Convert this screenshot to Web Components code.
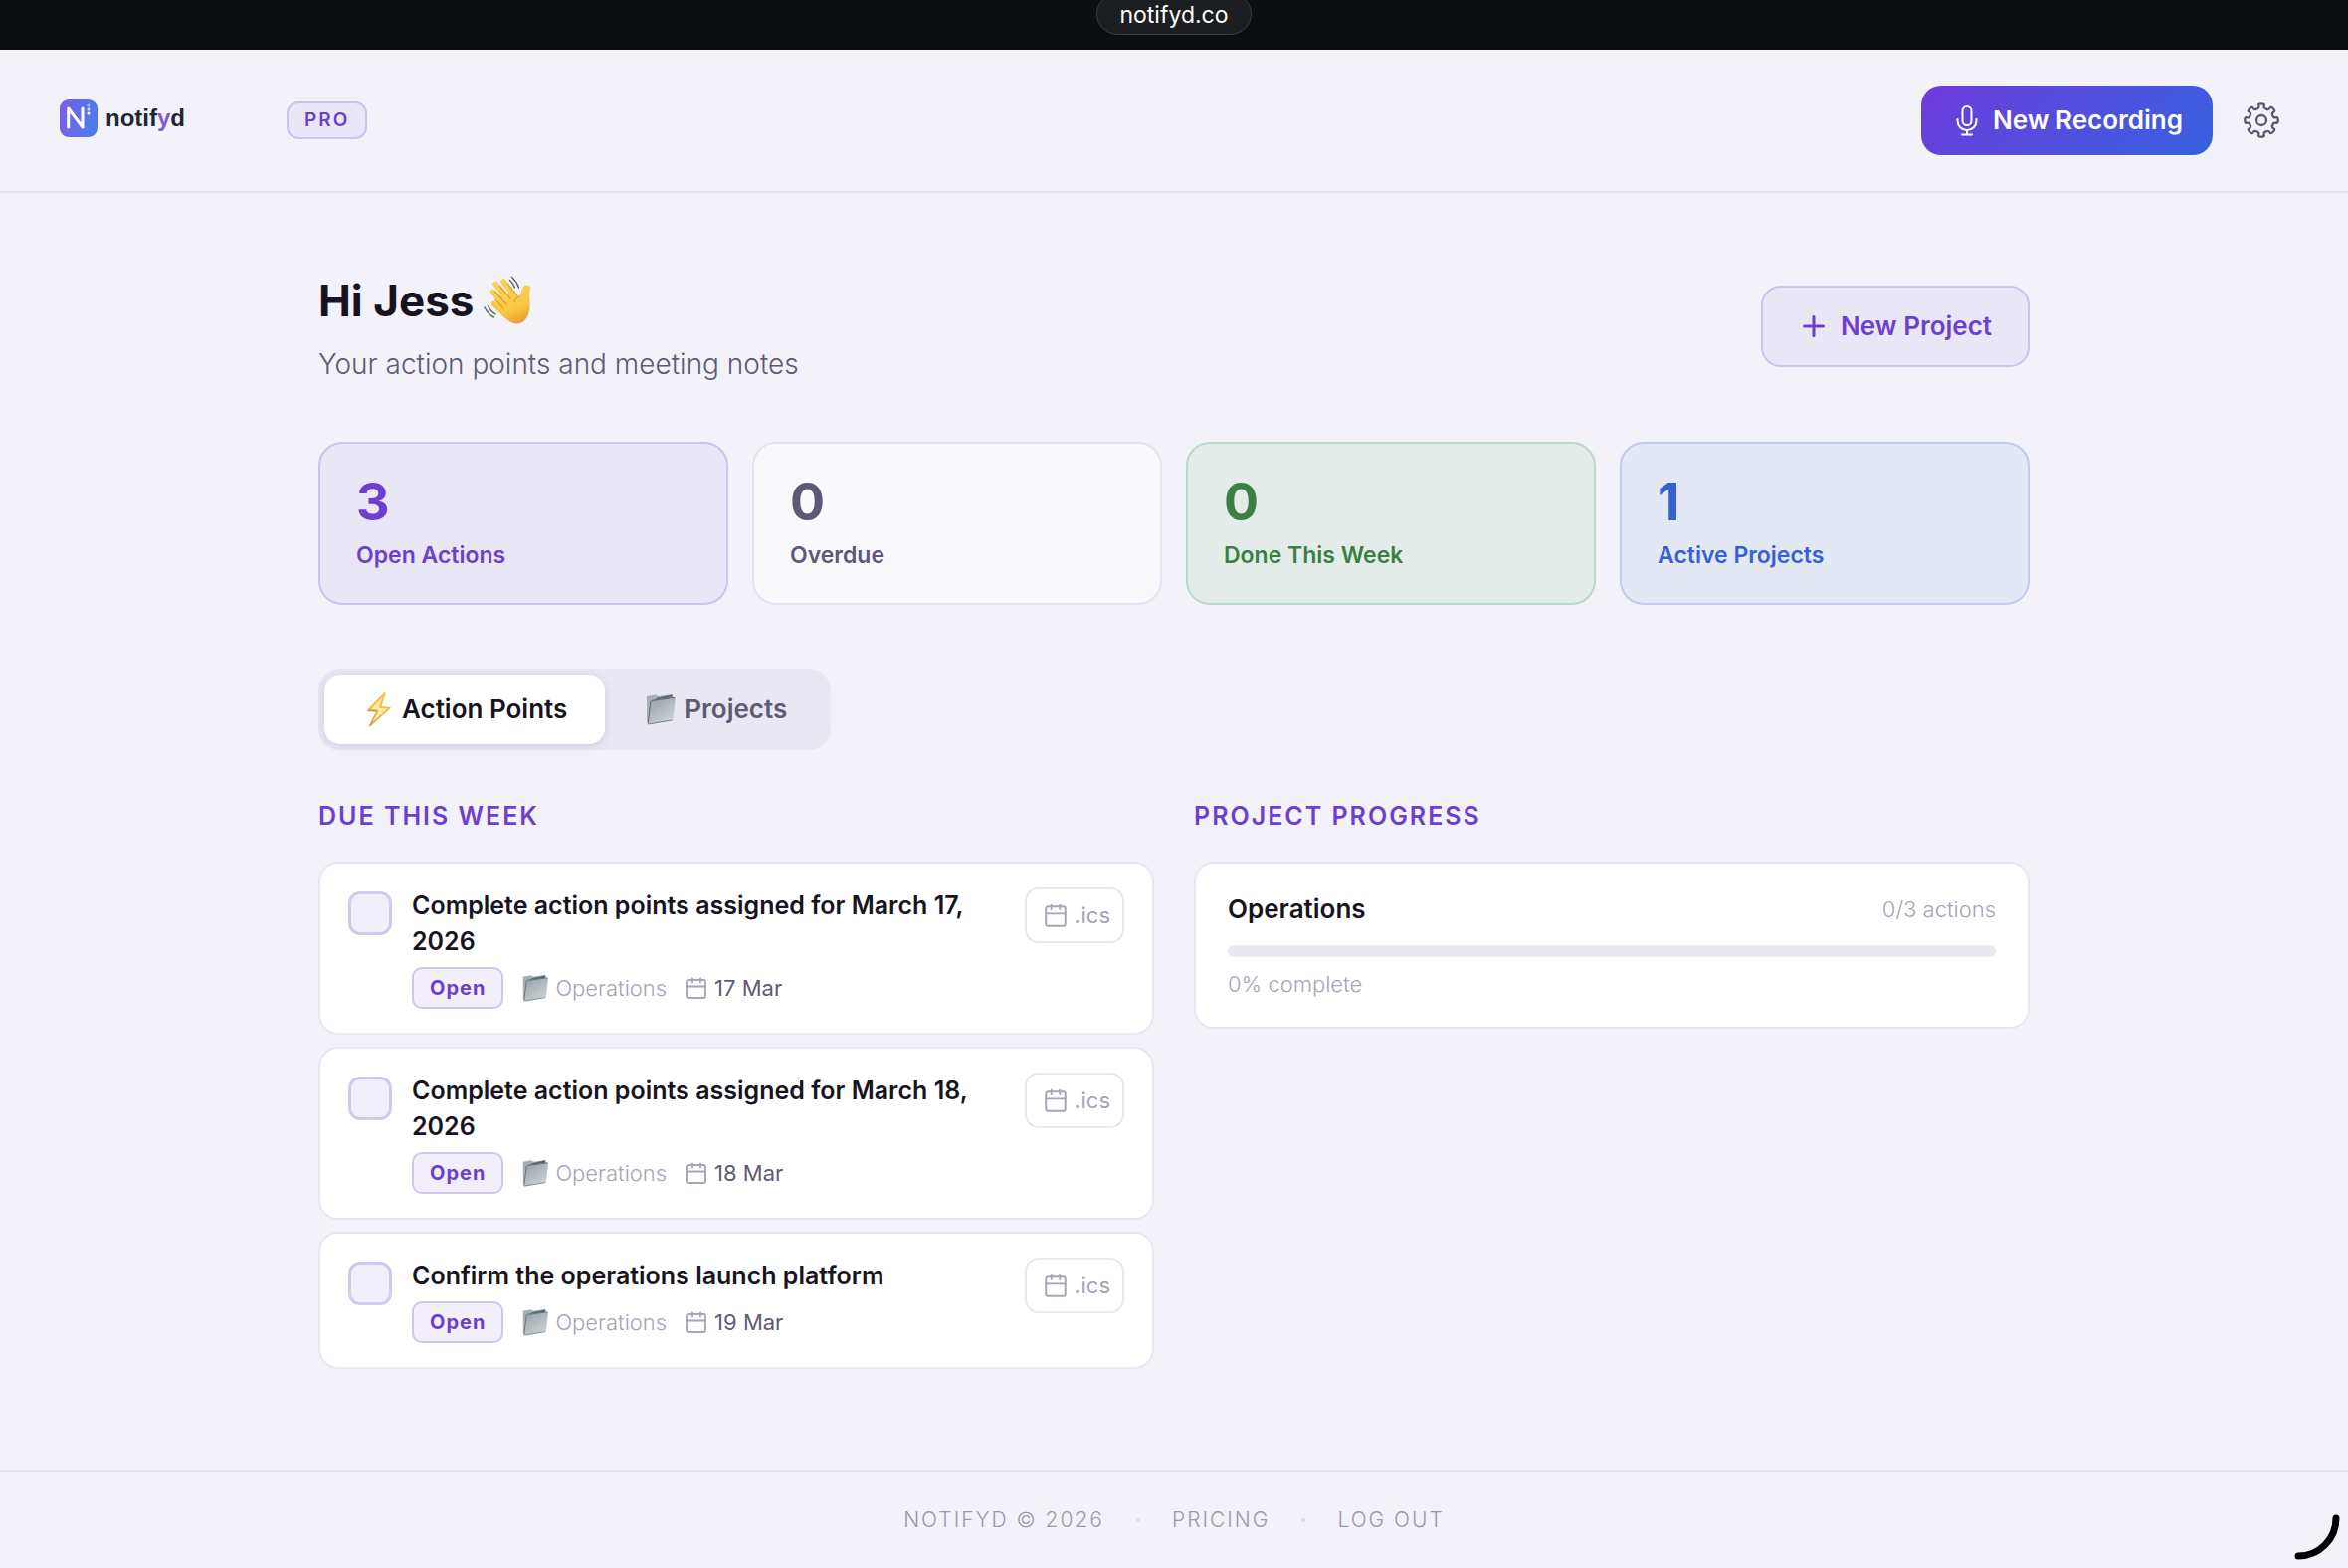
<!DOCTYPE html>
<html lang="en">
<head>
  <meta charset="UTF-8">
  <meta name="viewport" content="width=device-width, initial-scale=1.0">
  <title>notifyd</title>
  <style>
    body {
      margin: 0;
      font-family: Inter, "Liberation Sans", sans-serif;
      background: #f3f2f8;
      color: #17141f;
      /* shared palette, custom properties go through the shadow DOM */
      --purple: #6d3fcf;
      --purple-soft: #e9e6f5;
      --purple-line: #cdc2ea;
      --line: #e2e1ed;
      --muted: #5f5b73;
      --faint: #a6a4b5;
    }
  </style>
</head>
<body>
  <app-shell></app-shell>

  <template id="app-shell">
    <style>
      :host {
        display: flex;
        flex-direction: column;
        min-height: 100vh;
      }
      main {
        flex: 1;
        box-sizing: border-box;
        width: 100%;
        max-width: 1800px;
        margin: 0 auto;
        padding: 76px 40px 64px;
      }
      .intro {
        display: flex;
        align-items: center;
        justify-content: space-between;
        margin-bottom: 58px;
      }
      h1 {
        display: flex;
        align-items: center;
        gap: 10px;
        margin: 0 0 12px;
        font-size: 44px;
        line-height: 64px;
        font-weight: 700;
      }
      .intro p {
        margin: 0;
        font-size: 28px;
        line-height: 40px;
        font-weight: 300;
        color: var(--muted);
      }
      .new-project {
        display: flex;
        align-items: center;
        gap: 12px;
        height: 82px;
        padding: 0 36px;
        border: 2px solid var(--purple-line);
        border-radius: 20px;
        background: var(--purple-soft);
        color: var(--purple);
        font: 600 26px/32px Inter, sans-serif;
      }
      .stats {
        display: grid;
        grid-template-columns: repeat(4, 1fr);
        gap: 24px;
        margin-bottom: 64px;
      }
      .columns {
        display: grid;
        grid-template-columns: 1fr 1fr;
        gap: 40px;
        margin-top: 50px;
        align-items: start;
      }
      h2 {
        margin: 0 0 30px;
        font-size: 25px;
        line-height: 32px;
        font-weight: 600;
        letter-spacing: 2px;
        text-transform: uppercase;
        color: var(--purple);
      }
      .tasks {
        display: grid;
        gap: 12px;
      }
    </style>
    <address-bar>notifyd.co</address-bar>
    <site-header></site-header>
    <main>
      <div class="intro">
        <div>
          <h1>Hi Jess <ui-icon name="wave" size="50"></ui-icon></h1>
          <p>Your action points and meeting notes</p>
        </div>
        <button class="new-project" type="button"><ui-icon name="plus" size="30"></ui-icon>New Project</button>
      </div>
      <div class="stats">
        <stat-card value="3" tone="purple">Open Actions</stat-card>
        <stat-card value="0">Overdue</stat-card>
        <stat-card value="0" tone="green">Done This Week</stat-card>
        <stat-card value="1" tone="blue">Active Projects</stat-card>
      </div>
      <view-tabs></view-tabs>
      <div class="columns">
        <section>
          <h2>Due this week</h2>
          <div class="tasks">
            <task-card project="Operations" due="17 Mar">Complete action points assigned for March 17, 2026</task-card>
            <task-card project="Operations" due="18 Mar">Complete action points assigned for March 18, 2026</task-card>
            <task-card project="Operations" due="19 Mar">Confirm the operations launch platform</task-card>
          </div>
        </section>
        <section>
          <h2>Project progress</h2>
          <progress-card done="0" total="3">Operations</progress-card>
        </section>
      </div>
    </main>
    <site-footer></site-footer>
    <corner-arc></corner-arc>
  </template>

  <template id="address-bar">
    <style>
      :host {
        display: flex;
        justify-content: center;
        align-items: flex-start;
        height: 50px;
        overflow: hidden;
        background: #0d0e10;
      }
      /* the pill runs off the top edge of the window */
      span {
        box-sizing: border-box;
        height: 42px;
        margin-top: -7px;
        padding: 0 22px;
        border: 1px solid #3b3c40;
        border-radius: 21px;
        background: #1d1e21;
        color: #fff;
        font-size: 23px;
        line-height: 42px;
      }
    </style>
    <span><slot></slot></span>
  </template>

  <template id="site-header">
    <style>
      :host {
        display: flex;
        align-items: center;
        justify-content: space-between;
        box-sizing: border-box;
        height: 144px;
        padding: 0 60px;
        border-bottom: 2px solid var(--line);
      }
      div {
        display: flex;
        align-items: center;
      }
      .brand {
        display: flex;
        align-items: center;
        gap: 8px;
        width: 228px;
        padding-bottom: 4px;
        color: #1e2733;
        font: 700 24px/38px "Liberation Sans", sans-serif;
        text-decoration: none;
      }
      .brand b {
        color: #8158dc;
      }
      .plan {
        padding: 0 16px;
        border: 2px solid var(--purple-line);
        border-radius: 12px;
        background: var(--purple-soft);
        color: var(--purple);
        font-size: 19px;
        line-height: 34px;
        font-weight: 600;
        letter-spacing: 2px;
      }
      .record {
        display: flex;
        align-items: center;
        gap: 10px;
        height: 70px;
        padding: 0 30px;
        border: 0;
        border-radius: 20px;
        background: linear-gradient(135deg, #6f3bdc, #3562e0);
        color: #fff;
        font: 600 26px/32px Inter, sans-serif;
      }
      .settings {
        display: flex;
        margin-left: 22px;
        padding: 8px;
        border: 0;
        background: none;
        color: #5a5870;
      }
    </style>
    <div>
      <a class="brand" href="#"><ui-icon name="logo" size="38"></ui-icon><span>notif<b>y</b>d</span></a>
      <span class="plan">PRO</span>
    </div>
    <div>
      <button class="record" type="button"><ui-icon name="mic" size="32"></ui-icon>New Recording</button>
      <button class="settings" type="button" aria-label="Settings"><ui-icon name="gear" size="38"></ui-icon></button>
    </div>
  </template>

  <template id="stat-card">
    <style>
      :host {
        display: block;
        padding: 33px 36px;
        border: 2px solid #e4e2f0;
        border-radius: 24px;
        background: #f9f9fc;
        color: #5c5876;
      }
      :host([tone="purple"]) {
        border-color: var(--purple-line);
        background: var(--purple-soft);
        color: var(--purple);
      }
      :host([tone="green"]) {
        border-color: #b9d8c5;
        background: #e4ecea;
        color: #3b8043;
      }
      :host([tone="blue"]) {
        border-color: #bfcbea;
        background: #e3e8f5;
        color: #3760d8;
      }
      #value {
        margin-bottom: 12px;
        font-size: 52px;
        line-height: 52px;
        font-weight: 700;
      }
      .label {
        font-size: 23px;
        line-height: 30px;
        font-weight: 600;
      }
    </style>
    <div id="value"></div>
    <div class="label"><slot></slot></div>
  </template>

  <template id="view-tabs">
    <style>
      :host {
        display: block;
      }
      div {
        display: inline-flex;
        padding: 6px;
        border-radius: 22px;
        background: #e9e7f2;
        vertical-align: top;
      }
      button {
        display: flex;
        align-items: center;
        gap: 8px;
        height: 70px;
        padding: 0 38px 0 40px;
        border: 0;
        border-radius: 16px;
        background: none;
        color: var(--muted);
        font: 600 26px/32px Inter, sans-serif;
      }
      button[aria-selected="true"] {
        background: #fff;
        color: #17141f;
        box-shadow: 0 2px 8px rgba(60, 40, 120, .14);
      }
    </style>
    <div role="tablist">
      <button type="button" role="tab" aria-selected="true"><ui-icon name="bolt" size="30"></ui-icon>Action Points</button>
      <button type="button" role="tab" aria-selected="false"><ui-icon name="folder" size="32"></ui-icon>Projects</button>
    </div>
  </template>

  <template id="task-card">
    <style>
      :host {
        display: flex;
        align-items: flex-start;
        gap: 20px;
        padding: 24px 28px;
        border: 2px solid #e8e6f3;
        border-radius: 20px;
        background: #fff;
      }
      input {
        appearance: none;
        flex: none;
        box-sizing: border-box;
        width: 44px;
        height: 44px;
        margin: 4px 0 0;
        border: 3px solid #d3c9ec;
        border-radius: 12px;
        background: #f2effc;
      }
      input:checked {
        background: var(--purple);
      }
      .body {
        flex: 1;
      }
      label {
        display: block;
        margin-bottom: 8px;
        font-size: 25px;
        line-height: 36px;
        font-weight: 600;
      }
      .meta {
        display: flex;
        align-items: center;
        gap: 18px;
        font-size: 22px;
        line-height: 30px;
        font-weight: 300;
        color: var(--faint);
      }
      .meta span {
        display: flex;
        align-items: center;
        gap: 6px;
      }
      .meta .status {
        box-sizing: border-box;
        height: 42px;
        padding: 0 16px;
        border: 2px solid #d0c8e6;
        border-radius: 10px;
        background: #f2effb;
        color: var(--purple);
        font-size: 20px;
        font-weight: 700;
        letter-spacing: 1px;
      }
      time {
        font-weight: 400;
        color: var(--muted);
      }
      .ics {
        display: flex;
        align-items: center;
        gap: 6px;
        height: 56px;
        padding: 0 12px 0 16px;
        border: 2px solid #e8e6f1;
        border-radius: 14px;
        background: none;
        color: var(--faint);
        font: 400 22px/30px Inter, sans-serif;
      }
    </style>
    <input id="done" type="checkbox">
    <div class="body">
      <label for="done"><slot></slot></label>
      <div class="meta">
        <span class="status">Open</span>
        <span><ui-icon name="folder" size="28"></ui-icon><span id="project"></span></span>
        <span><ui-icon name="calendar" size="24"></ui-icon><time id="due"></time></span>
      </div>
    </div>
    <button class="ics" type="button"><ui-icon name="calendar" size="26"></ui-icon>.ics</button>
  </template>

  <template id="progress-card">
    <style>
      :host {
        display: block;
        padding: 28px 32px;
        border: 2px solid #e8e6f3;
        border-radius: 20px;
        background: #fff;
        font-size: 22px;
        line-height: 30px;
        font-weight: 300;
        color: var(--faint);
      }
      .top {
        display: flex;
        align-items: center;
        justify-content: space-between;
      }
      h3 {
        margin: 0;
        font-size: 26px;
        line-height: 36px;
        font-weight: 600;
        color: #17141f;
      }
      progress {
        appearance: none;
        display: block;
        width: 100%;
        height: 12px;
        margin: 18px 0 12px;
        border: 0;
        border-radius: 6px;
        overflow: hidden;
        background: #e9e8f0;
      }
      progress::-webkit-progress-bar {
        background: #e9e8f0;
      }
      progress::-webkit-progress-value {
        background: var(--purple);
      }
    </style>
    <div class="top">
      <h3 id="name"><slot></slot></h3>
      <span id="count"></span>
    </div>
    <progress aria-labelledby="name"></progress>
    <div id="percent"></div>
  </template>

  <template id="site-footer">
    <style>
      :host {
        display: flex;
        justify-content: center;
        align-items: center;
        gap: 32px;
        height: 96px;
        border-top: 2px solid var(--line);
        font-size: 21px;
        line-height: 28px;
        font-weight: 300;
        letter-spacing: 2px;
        color: #9b98ac;
      }
      a {
        color: inherit;
        text-decoration: none;
      }
      i {
        width: 4px;
        height: 4px;
        border-radius: 2px;
        background: #dddbed;
      }
    </style>
    <span>NOTIFYD © 2026</span>
    <i></i>
    <a href="#pricing">PRICING</a>
    <i></i>
    <a href="#logout">LOG OUT</a>
  </template>

  <template id="corner-arc">
    <style>
      :host {
        position: fixed;
        right: 8px;
        bottom: 8px;
        width: 46px;
        height: 46px;
      }
      svg {
        display: block;
      }
    </style>
    <svg width="46" height="46" viewBox="0 0 46 46" fill="none" stroke="#000" stroke-width="7" stroke-linecap="round">
      <path d="M42 4A38 38 0 0 1 4 42"/>
    </svg>
  </template>

  <script>

    // Eight soft teeth: a closed curve through the midpoints of its control points
    function gearPath(c) {
      const points = [];
      for (let tooth = 0; tooth < 8; tooth++) {
        [[-15, 12.4], [-10, 13.4], [-11, 17], [11, 17], [10, 13.4], [15, 12.4]].forEach(([offset, radius]) => {
          const angle = (tooth * 45 + offset) * Math.PI / 180;
          points.push([c + radius * Math.sin(angle), c - radius * Math.cos(angle)]);
        });
      }
      const middle = (a, b) => `${((a[0] + b[0]) / 2).toFixed(2)} ${((a[1] + b[1]) / 2).toFixed(2)}`;
      let d = `M${middle(points[points.length - 1], points[0])}`;
      points.forEach((p, i) => {
        d += `Q${p[0].toFixed(2)} ${p[1].toFixed(2)} ${middle(p, points[(i + 1) % points.length])}`;
      });
      return d + 'Z';
    }

    const ICONS = {
      logo: `<svg viewBox="0 0 38 38" fill="none">
        <defs><linearGradient id="g" x1="0" y1="0" x2="1" y2=".3"><stop stop-color="#7c5ce6"/><stop offset="1" stop-color="#4f7cec"/></linearGradient></defs>
        <rect width="38" height="38" rx="9" fill="url(#g)"/>
        <path d="M8.700 28V9L23 28V9" stroke="#fff" stroke-width="3" stroke-linecap="round" stroke-linejoin="round"/>
        <g fill="#fff"><circle cx="29" cy="6" r="1.500" opacity=".5"/><circle cx="29" cy="10" r="1.500" opacity=".75"/><circle cx="29" cy="14" r="1.500"/></g></svg>`,
      mic: `<svg viewBox="0 0 32 32" fill="none" stroke="currentColor" stroke-width="2" stroke-linecap="round">
        <rect x="11.500" y="2" width="9" height="19" rx="4.500"/><path d="M6.500 15v1.500a9.500 9.500 0 0 0 19 0V15M16 26v4.500M11 30.500h10"/></svg>`,
      gear: `<svg viewBox="0 0 38 38" fill="none" stroke="currentColor" stroke-width="2.300"><path d="${gearPath(19)}"/><circle cx="19" cy="19" r="5"/></svg>`,
      plus: `<svg viewBox="0 0 30 30" stroke="currentColor" stroke-width="3" stroke-linecap="round"><path d="M15 5.500v19M5.500 15h19"/></svg>`,
      calendar: `<svg viewBox="0 0 24 24" fill="none" stroke="currentColor" stroke-width="1.800" stroke-linecap="round">
        <rect x="3" y="4" width="18" height="18" rx="2"/><path d="M3 10.500h18M8 2.500v4M16 2.500v4"/></svg>`,
      bolt: `<svg viewBox="-3 1 30 30"><defs><linearGradient id="b" x1="1" y1="0" x2="0" y2="1"><stop stop-color="#efc93e"/><stop offset=".5" stop-color="#f3b93a"/><stop offset="1" stop-color="#cfa65a"/></linearGradient></defs>
        <path d="M17.800 -.2L1 17.300L10.300 18L2.600 32.600L22.800 14.600L13.200 14Z" fill="#fdeca4" stroke="url(#b)" stroke-width="1.800" stroke-linejoin="round"/><path d="M1.500 17L10.500 17.500" stroke="#e58f3c" stroke-width="1.500"/></svg>`,
      folder: `<svg viewBox="0 0 32 32"><defs><linearGradient id="f" x1="0" y1="0" x2=".7" y2="1"><stop stop-color="#949da3"/><stop offset="1" stop-color="#ccd2d5"/></linearGradient></defs>
        <path d="M2 3l9-1.500 3 1.500 14-2v5L2 29Z" fill="#a3b0b8"/><path d="M13 4.500L27.500 1.500V5L5 9Z" fill="#5d676e"/>
        <path d="M5.500 8.500Q5.600 7.300 7 7L29.500 4Q31 4 30.800 5.500L28.500 25.500Q28.300 27 27 27.200L4 31Q2.500 31 2.700 29.500Z" fill="url(#f)"/>
        <path d="M3.200 30.500L5.800 8.800Q6 7.600 7.200 7.400L30 4.400" fill="none" stroke="#606a70"/><path d="M3.500 31L27.500 27" stroke="#7b858b"/></svg>`,
      wave: `<svg viewBox="0 0 50 50"><defs><linearGradient id="w" x1=".2" y1="0" x2=".6" y2="1"><stop stop-color="#f9d35d"/><stop offset=".65" stop-color="#f8c842"/><stop offset="1" stop-color="#e8a02e"/></linearGradient></defs>
        <g fill="none" stroke="url(#w)" stroke-linecap="round" stroke-width="5.600"><path d="M20 6L32 21M12 8.500L27 27M9.500 16.500L23 32M10.500 28.500L20 37"/></g>
        <path d="M17 19L29 16L35 21Q38 19 38.500 14Q39.500 9.500 43 9.500Q48 9.500 47 14Q45.500 19 46.500 25Q47.500 33 45 39Q41.500 48.500 33 48.500Q27 48 20 41.500L12 33Z" fill="url(#w)"/>
        <g fill="none" stroke="#dda02f" stroke-width="1.200" stroke-linecap="round"><path d="M16 10L27 23M11.500 16L23 29M12 24.500L20 33M24.500 8.500L33 19.500M31 27Q32 22.500 35.500 21"/></g>
        <g fill="none" stroke="#5b6167" stroke-width="1.400" stroke-linecap="round"><path d="M28.500 1.500Q33.500 6 35.500 12M26.500 4.500Q30 8 31.500 12M1 32Q4.500 39 10.500 42M4.500 31Q7 36 12 39"/></g></svg>`
    };

    // Base for every element: clones the template that has the same id as the tag
    class TemplateElement extends HTMLElement {

      constructor() {
        super();
        this.attachShadow({ mode: 'open' });
        const $template = document.getElementById(this.localName);
        this.shadowRoot.appendChild(document.importNode($template.content, true));
      }

      $(selector) {
        return this.shadowRoot.querySelector(selector);
      }

    }

    class UiIcon extends HTMLElement {

      constructor() {
        super();
        this.attachShadow({ mode: 'open' });
      }

      connectedCallback() {
        const size = this.getAttribute('size');
        this.shadowRoot.innerHTML = `
          <style>
            :host { display: inline-flex; flex: none; width: ${size}px; height: ${size}px; }
            svg { width: 100%; height: 100%; overflow: visible; }
          </style>
          ${ICONS[this.getAttribute('name')]}`;
        this.shadowRoot.querySelector('svg').setAttribute('aria-hidden', 'true');
      }

    }

    class StatCard extends TemplateElement {
      connectedCallback() {
        this.$('#value').textContent = this.getAttribute('value');
      }
    }

    class ViewTabs extends TemplateElement {
      connectedCallback() {
        const $tabs = this.shadowRoot.querySelectorAll('button');
        $tabs.forEach(($tab) => {
          $tab.addEventListener('click', () => {
            $tabs.forEach(($other) => $other.setAttribute('aria-selected', String($other === $tab)));
          });
        });
      }
    }

    class TaskCard extends TemplateElement {
      connectedCallback() {
        this.$('#project').textContent = this.getAttribute('project');
        this.$('#due').textContent = this.getAttribute('due');
      }
    }

    class ProgressCard extends TemplateElement {
      connectedCallback() {
        const done = Number(this.getAttribute('done'));
        const total = Number(this.getAttribute('total'));
        this.$('#count').textContent = `${done}/${total} actions`;
        this.$('#percent').textContent = `${Math.round(done / total * 100)}% complete`;
        this.$('progress').max = total;
        this.$('progress').value = done;
      }
    }

    customElements.define('ui-icon', UiIcon);
    customElements.define('address-bar', class extends TemplateElement {});
    customElements.define('site-header', class extends TemplateElement {});
    customElements.define('stat-card', StatCard);
    customElements.define('view-tabs', ViewTabs);
    customElements.define('task-card', TaskCard);
    customElements.define('progress-card', ProgressCard);
    customElements.define('site-footer', class extends TemplateElement {});
    customElements.define('corner-arc', class extends TemplateElement {});
    customElements.define('app-shell', class extends TemplateElement {});

  </script>
</body>
</html>
